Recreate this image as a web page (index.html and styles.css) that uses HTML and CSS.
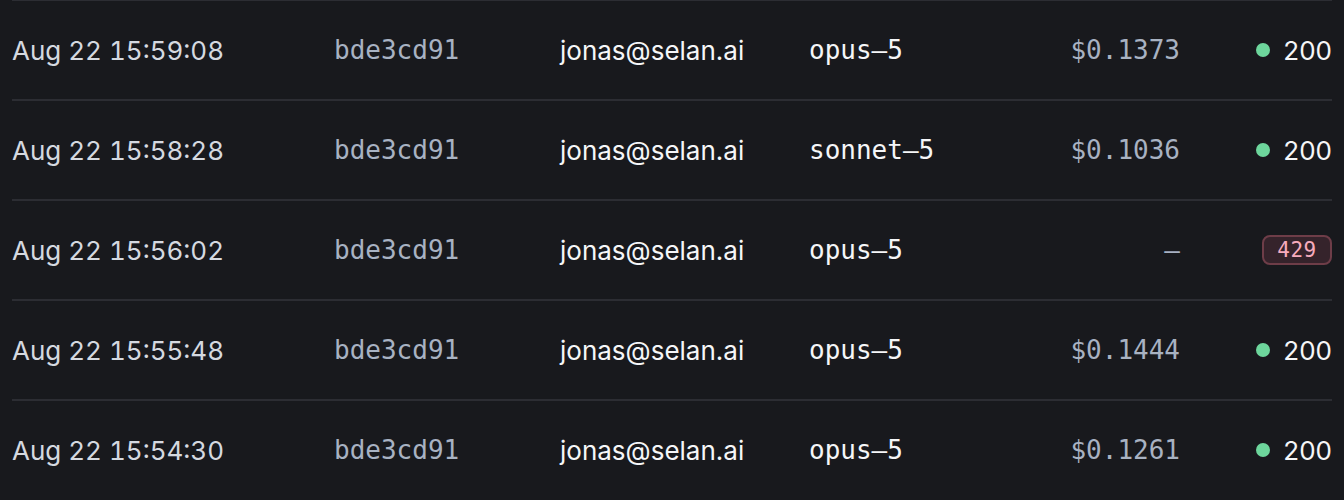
FILE: index.html
```html
<!DOCTYPE html>
<html lang="en">
<head>
<meta charset="UTF-8" />
<title>Request log</title>
<link rel="stylesheet" href="styles.css">
</head>
<body>
  <div class="log" role="table" aria-label="Request log">
    <div class="row" role="row">
      <span class="time">Aug 22 15:59:08</span>
      <span class="mono hash">bde3cd91</span>
      <span class="user">jonas@selan.ai</span>
      <span class="mono model">opus&#8211;5</span>
      <span class="mono cost">$0.1373</span>
      <span class="status"><i class="dot"></i>200</span>
    </div>
    <div class="row" role="row">
      <span class="time">Aug 22 15:58:28</span>
      <span class="mono hash">bde3cd91</span>
      <span class="user">jonas@selan.ai</span>
      <span class="mono model">sonnet&#8211;5</span>
      <span class="mono cost">$0.1036</span>
      <span class="status"><i class="dot"></i>200</span>
    </div>
    <div class="row" role="row">
      <span class="time">Aug 22 15:56:02</span>
      <span class="mono hash">bde3cd91</span>
      <span class="user">jonas@selan.ai</span>
      <span class="mono model">opus&#8211;5</span>
      <span class="mono cost">&#8211;</span>
      <span class="status"><span class="badge">429</span></span>
    </div>
    <div class="row" role="row">
      <span class="time">Aug 22 15:55:48</span>
      <span class="mono hash">bde3cd91</span>
      <span class="user">jonas@selan.ai</span>
      <span class="mono model">opus&#8211;5</span>
      <span class="mono cost">$0.1444</span>
      <span class="status"><i class="dot"></i>200</span>
    </div>
    <div class="row" role="row">
      <span class="time">Aug 22 15:54:30</span>
      <span class="mono hash">bde3cd91</span>
      <span class="user">jonas@selan.ai</span>
      <span class="mono model">opus&#8211;5</span>
      <span class="mono cost">$0.1261</span>
      <span class="status"><i class="dot"></i>200</span>
    </div>
  </div>
</body>
</html>
```

FILE: styles.css
```css
* {
  box-sizing: border-box;
}

body {
  margin: 0;
  background: #18191d;
  font-family: Inter, "Noto Sans", sans-serif;
  font-size: 26px;
  color: #f5f6f8;
}

.log {
  margin: -1px 12px 0;
}

.row {
  display: grid;
  grid-template-columns: 323px 225px 249px 190px 181px 152px;
  align-items: center;
  height: 100px;
  border-top: 2px solid #2c2d33;
}

.mono {
  font-family: "DejaVu Sans Mono", "Liberation Mono", monospace;
}

.time {
  color: #d5d9e0;
  font-feature-settings: "tnum";
}

.hash {
  color: #a8b2c2;
  margin-left: -1px;
}

.user,
.model {
  color: #f5f6f8;
}

.cost {
  color: #a8b2c2;
  text-align: right;
}

.status {
  display: flex;
  justify-content: flex-end;
  align-items: center;
  color: #f5f6f8;
}

.dot {
  width: 14px;
  height: 14px;
  border-radius: 50%;
  background: #6dd69c;
  margin-right: 13px;
}

.badge {
  font-family: "DejaVu Sans Mono", "Liberation Mono", monospace;
  font-size: 21px;
  color: #f7abbd;
  background: #35232b;
  border: 2px solid #6e3d48;
  border-radius: 8px;
  width: 70px;
  height: 30px;
  display: flex;
  align-items: center;
  justify-content: center;
  letter-spacing: 0.5px;
}
```
